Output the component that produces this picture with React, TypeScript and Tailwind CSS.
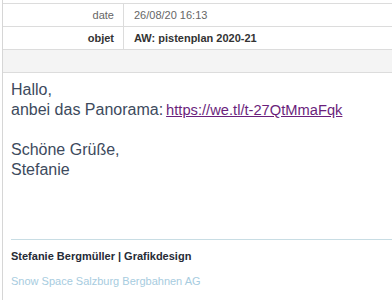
const rows = [
  { label: "date", value: "26/08/20 16:13", bold: false },
  { label: "objet", value: "AW: pistenplan 2020-21", bold: true },
];

const App = () => {
  return (
    <div className="w-[392px] h-[300px] overflow-hidden bg-white font-['Liberation_Sans',Arial,sans-serif]">
      <div className="ml-[2px] h-full border-l border-[#d6d6d6] pt-[3px]">
        <div className="border-t border-[#dcdcdc]">
          {rows.map((row) => (
            <div
              key={row.label}
              className={`flex h-[23px] border-b border-[#dcdcdc] text-[11px] ${
                row.bold ? "font-bold text-[#333333]" : "text-[#666666]"
              }`}
            >
              <div className="w-[121px] shrink-0 border-r border-[#dcdcdc] pr-[9px] text-right leading-[22px]">
                {row.label}
              </div>
              <div className="pl-[10px] leading-[22px]">{row.value}</div>
            </div>
          ))}
          <div className="h-[23px] border-b border-[#dcdcdc] bg-[#f4f4f4]" />
        </div>

        <div className="px-[8px] pt-[7px] text-[16px] leading-[20px] text-[#3d4a5d]">
          <p>Hallo,</p>
          <p>
            anbei das Panorama:
            <a href="#" className="ml-[3px] text-[14.7px] text-[#6b1f7c] underline">
              https://we.tl/t-27QtMmaFqk
            </a>
          </p>
          <p className="h-[20px]" />
          <p>Schöne Grüße,</p>
          <p>Stefanie</p>
        </div>

        <div className="ml-[8px] mt-[59px] border-t border-[#c8dde4] pt-[9px] text-[11px]">
          <p className="font-bold leading-[14px] text-[#262b36]">
            Stefanie Bergmüller | Grafikdesign
          </p>
          <p className="mt-[11px] leading-[14px] text-[#a7cce0]">
            Snow Space Salzburg Bergbahnen AG
          </p>
        </div>
      </div>
    </div>
  );
};

export default App;
